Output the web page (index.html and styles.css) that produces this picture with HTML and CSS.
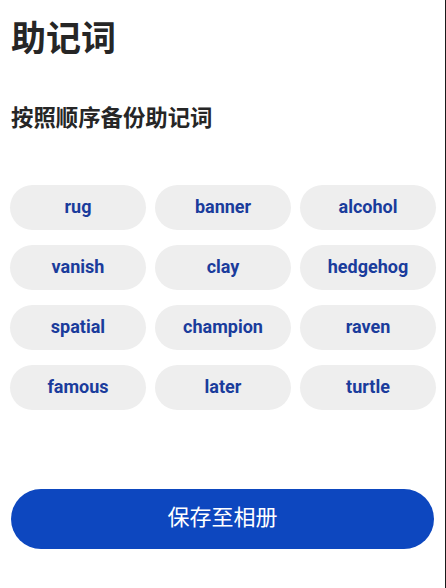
FILE: index.html
```html
<!DOCTYPE html>
<html lang="zh-CN">
<head>
    <meta charset="UTF-8">
    <meta name="viewport" content="width=device-width, initial-scale=1.0">
    <title>助记词</title>
    <link rel="stylesheet" href="styles.css">
</head>
<body>
    <div class="page">
        <h1 class="title">助记词</h1>
        <h2 class="subtitle">按照顺序备份助记词</h2>
        <div class="words">
            <div class="word">rug</div>
            <div class="word">banner</div>
            <div class="word">alcohol</div>
            <div class="word">vanish</div>
            <div class="word">clay</div>
            <div class="word">hedgehog</div>
            <div class="word">spatial</div>
            <div class="word">champion</div>
            <div class="word">raven</div>
            <div class="word">famous</div>
            <div class="word">later</div>
            <div class="word">turtle</div>
        </div>
        <button class="save-btn">保存至相册</button>
    </div>
</body>
</html>
```

FILE: styles.css
```css
html, body {
    margin: 0;
    padding: 0;
    background-color: #ffffff;
}
body {
    font-family: 'Roboto', 'Noto Sans CJK SC', sans-serif;
    color: #222222;
}
.page {
    box-sizing: border-box;
    width: 446px;
    height: 588px;
    border-right: 1px solid #1a1a1a;
    padding: 0 10px;
}
.title {
    font-family: 'Noto Sans CJK SC', sans-serif;
    font-size: 35px;
    font-weight: 700;
    line-height: 42px;
    margin: 0;
    padding: 15px 0 0 1px;
    color: #262626;
}
.subtitle {
    font-family: 'Noto Sans CJK SC', sans-serif;
    font-size: 22.4px;
    font-weight: 700;
    line-height: 30px;
    margin: 44px 0 0 1px;
    color: #262626;
}
.words {
    display: grid;
    grid-template-columns: repeat(3, 1fr);
    column-gap: 9px;
    row-gap: 15px;
    margin-top: 54px;
    width: 426px;
}
.word {
    box-sizing: border-box;
    height: 45px;
    padding-bottom: 2px;
    border-radius: 23px;
    background-color: #eeeeee;
    color: #1a3c9c;
    font-size: 18px;
    font-weight: 700;
    display: flex;
    align-items: center;
    justify-content: center;
}
.save-btn {
    display: block;
    width: 423px;
    height: 60px;
    margin: 79px 0 0 1px;
    padding: 0 0 8px;
    border: none;
    border-radius: 30px;
    background-color: #0d47bf;
    color: #ffffff;
    font-family: 'Noto Sans CJK SC', sans-serif;
    font-size: 22px;
    font-weight: 400;
}
```
